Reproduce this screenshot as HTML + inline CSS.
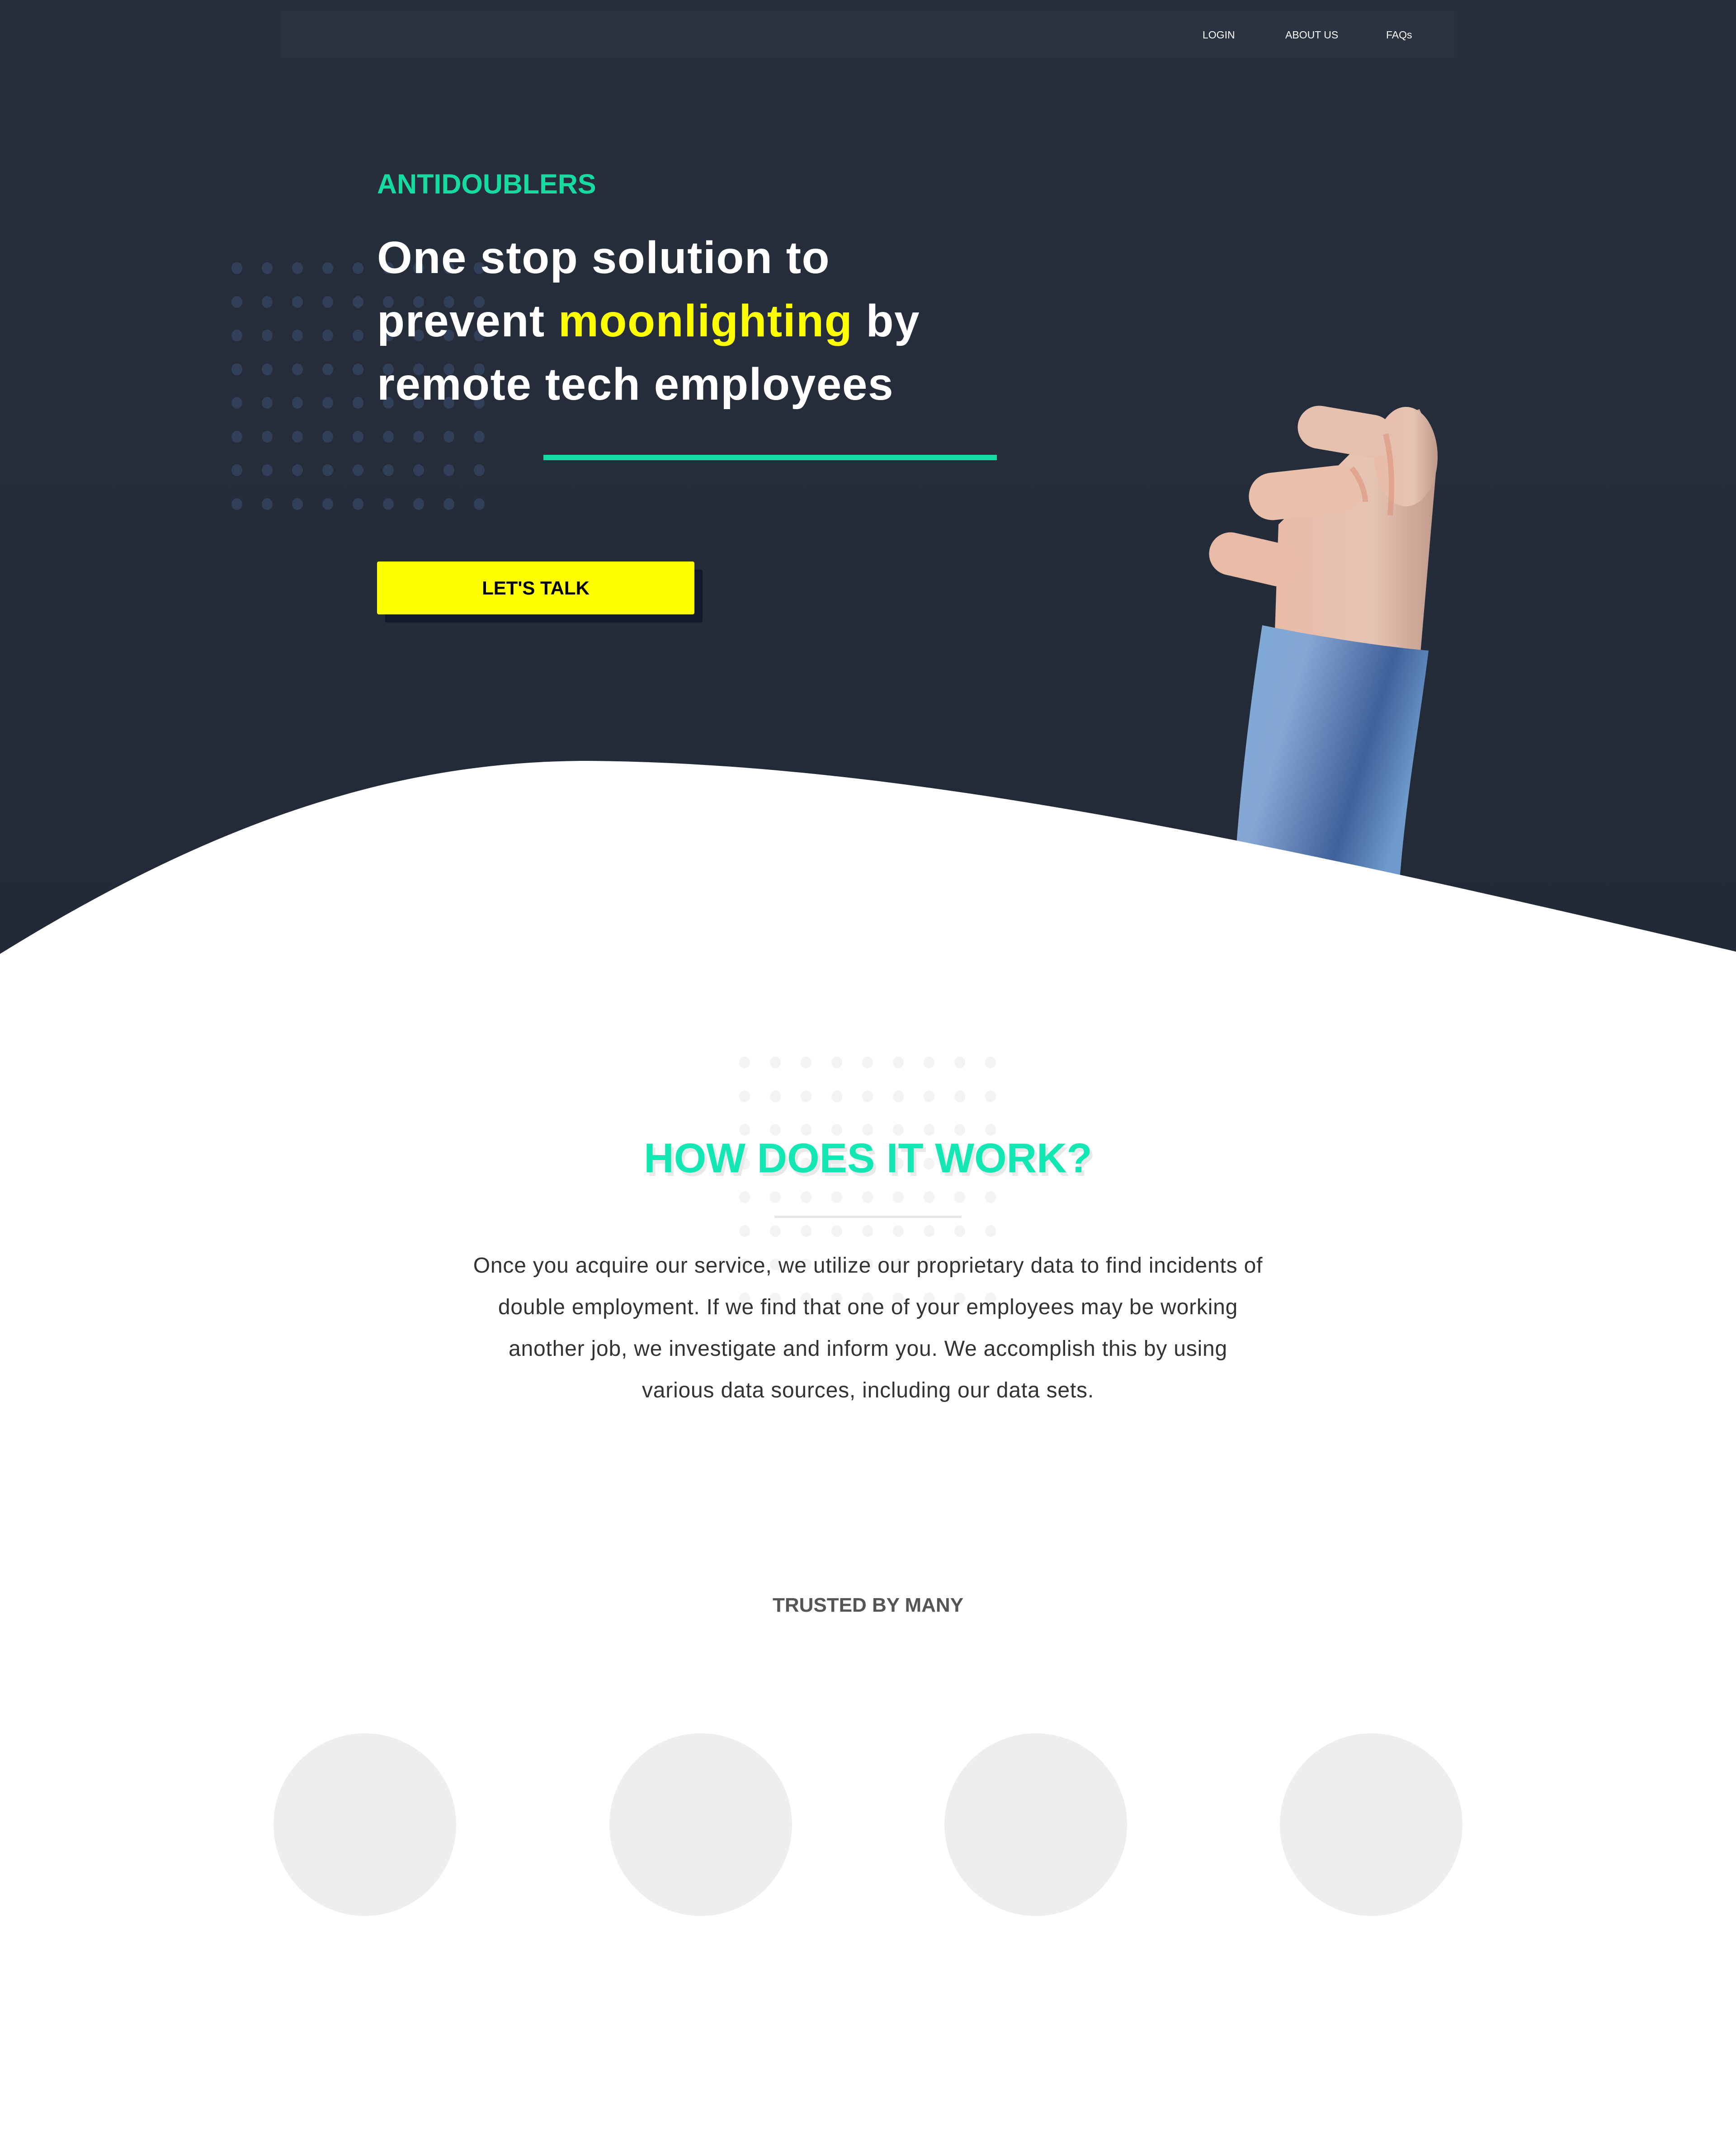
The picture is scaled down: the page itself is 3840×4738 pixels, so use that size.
<!DOCTYPE html>
<html><head><meta charset="utf-8"><style>
*{margin:0;padding:0;box-sizing:border-box}
body{width:3840px;height:4738px;position:relative;background:#fff;font-family:"Liberation Sans",sans-serif;overflow:hidden}
.hero{position:absolute;left:0;top:0;width:3840px;height:2110px;background:linear-gradient(#272e3c,#232a37)}
.nav{position:absolute;left:619px;top:24px;width:2598px;height:103px;background:#2b3240}
.nav a{position:absolute;top:40px;color:#fff;font-size:23px;text-decoration:none}
.dots{position:absolute}
.dots i{position:absolute;width:24px;height:26px;border-radius:50%}
.abs{position:absolute}
</style></head><body>
<div class="hero"></div>
<div class="nav">
<a style="left:2041px">LOGIN</a>
<div class="abs" style="left:2159px;top:30px;width:2px;height:45px;background:#283040"></div>
<a style="left:2224px">ABOUT US</a>
<div class="abs" style="left:2380px;top:30px;width:2px;height:45px;background:#283040"></div>
<a style="left:2447px">FAQs</a>
</div>
<div id="d1" class="dots" style="left:512px;top:580px"></div>
<div id="d2" class="dots" style="left:1635px;top:2337px"></div>
<div class="abs" style="left:834px;top:372px;font-size:61px;font-weight:bold;color:#16dba0">ANTIDOUBLERS</div>
<div class="abs" style="left:834px;top:500px;font-size:100px;letter-spacing:1.5px;font-weight:bold;color:#fff;line-height:140px;white-space:nowrap">One stop solution to<br>prevent <span style="color:#ffff00">moonlighting</span> by<br>remote tech employees</div>
<div class="abs" style="left:1202px;top:1006px;width:1003px;height:12px;background:#16dba0"></div>
<div class="abs" style="left:852px;top:1260px;width:702px;height:117px;background:#111a2b;border-radius:4px"></div>
<div class="abs" style="left:834px;top:1242px;width:702px;height:117px;background:#ffff00;border-radius:4px;text-align:center;line-height:117px;font-size:42px;font-weight:bold;color:#000">LET'S TALK</div>
<svg class="abs" style="left:0;top:0" width="3840" height="2200">
<defs>
<linearGradient id="sl" x1="0" y1="0" x2="1" y2="0.4"><stop offset="0" stop-color="#7aaad6"/><stop offset="0.35" stop-color="#86a6d4"/><stop offset="0.75" stop-color="#3f619a"/><stop offset="1" stop-color="#6e9bcc"/></linearGradient>
<linearGradient id="sk" x1="0" y1="0" x2="1" y2="0"><stop offset="0" stop-color="#e8bba6"/><stop offset="0.6" stop-color="#e6c4b4"/><stop offset="1" stop-color="#c0998a"/></linearGradient>
</defs>
<g fill="url(#sk)" stroke-linecap="round">
<path d="M2820,1395 L2828,1160 L2950,1040 L3060,930 L3140,905 L3180,1000 L3142,1445 Z"/>
<ellipse cx="3110" cy="1010" rx="70" ry="110"/>
<line x1="2722" y1="1225" x2="2830" y2="1250" stroke="#e8bba6" stroke-width="95"/>
<line x1="2815" y1="1098" x2="2960" y2="1082" stroke="#e9c0ac" stroke-width="105"/>
<line x1="2918" y1="945" x2="3035" y2="965" stroke="#e6c0ae" stroke-width="95"/>
</g>
<path d="M2990,1035 C3010,1060 3020,1090 3020,1110 M3065,960 C3080,1020 3080,1080 3075,1140" stroke="#d98a72" stroke-width="12" fill="none" opacity="0.5"/>
<path d="M2792,1383 C2900,1405 3050,1430 3160,1439 C3140,1600 3110,1760 3095,1960 L2729,1960 C2740,1760 2765,1560 2792,1383 Z" fill="url(#sl)"/>
<path d="M0,2110 C500,1800 900,1683 1300,1683 C2000,1688 2800,1860 3840,2105 L3840,2200 L0,2200 Z" fill="#fff"/>
</svg>
<div class="abs" style="left:0;top:2510px;width:3840px;text-align:center;font-size:92px;font-weight:bold;color:#13e8b4;text-shadow:6px 8px 0 #e9e9e9">HOW DOES IT WORK?</div>
<div class="abs" style="left:1713px;top:2689px;width:414px;height:5px;background:#e6e6e6"></div>
<div class="abs" style="left:900px;top:2754px;width:2040px;text-align:center;font-size:48px;letter-spacing:0.8px;line-height:92px;color:#333">Once you acquire our service, we utilize our proprietary data to find incidents of<br>double employment. If we find that one of your employees may be working<br>another job, we investigate and inform you. We accomplish this by using<br>various data sources, including our data sets.</div>
<div class="abs" style="left:0;top:3526px;width:3840px;text-align:center;font-size:44px;font-weight:bold;color:#555">TRUSTED BY MANY</div>
<div class="abs" style="left:605px;top:3834px;width:404px;height:404px;border-radius:50%;background:#eee"></div>
<div class="abs" style="left:1348px;top:3834px;width:404px;height:404px;border-radius:50%;background:#eee"></div>
<div class="abs" style="left:2089px;top:3834px;width:404px;height:404px;border-radius:50%;background:#eee"></div>
<div class="abs" style="left:2831px;top:3834px;width:404px;height:404px;border-radius:50%;background:#eee"></div>
<script>
function g(id,c,sx,sy){var e=document.getElementById(id),h='';for(var r=0;r<8;r++)for(var k=0;k<9;k++)h+='<i style="left:'+k*sx+'px;top:'+r*sy+'px;background:'+c+'"></i>';e.innerHTML=h;}
g('d1','#323f58',67,74.5);g('d2','#f3f3f3',68,74.5);
</script>
</body></html>
